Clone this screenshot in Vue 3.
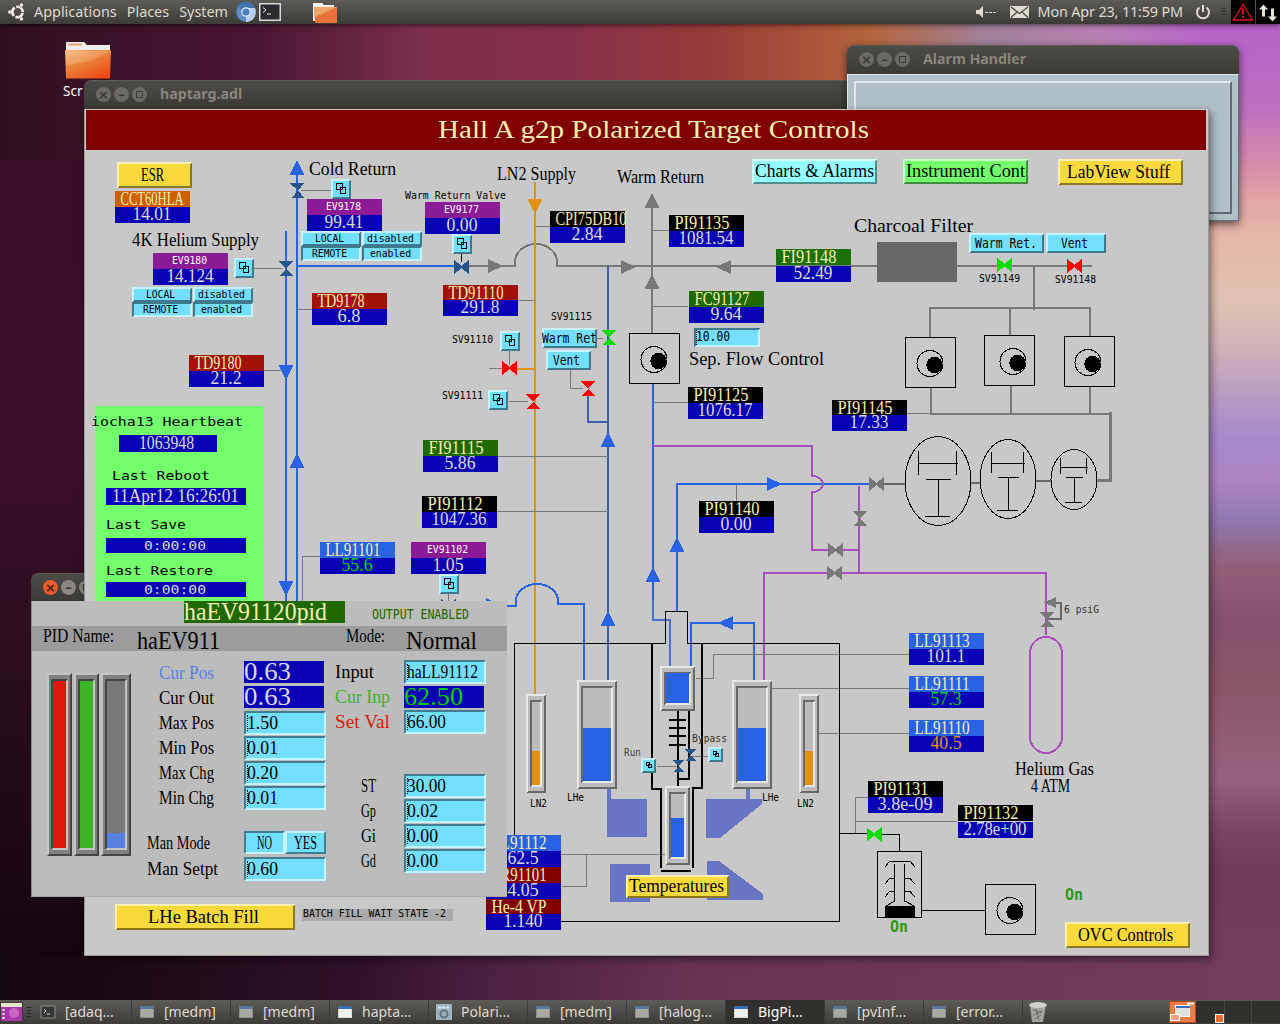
<script setup>
import { h } from 'vue';

/*
 * Fixed-width faces
 * -------------------------------------------------------------------------
 *
 * Every face is laid out in cells: adv = cell width, size = font size.
 *
 */
const faces = {
  big: { adv: 8, size: 18.5, family: '"Liberation Serif", serif', line: 17, base: 14 },
  title: { adv: 12, size: 24.5, family: '"Liberation Serif", serif', line: 22, base: 19 },
  small: { adv: 6, size: 10, family: '"DejaVu Sans Mono", monospace', line: 11, base: 9 },
  medium: { adv: 7, size: 13.5, family: '"DejaVu Sans Mono", monospace', line: 14, base: 11 },
  wide: { adv: 9, size: 13, family: '"DejaVu Sans Mono", monospace', line: 14, base: 11 },
  state: { adv: 9.5, size: 16, family: '"DejaVu Sans Mono", monospace', line: 14, base: 11, weight: 'bold' }
};

// Squeezes a string into its fixed-width cells
const fit = (face, text) => ({
  'font-family': faces[face].family,
  'font-size': faces[face].size,
  'font-weight': faces[face].weight || 'normal',
  textLength: text.length*faces[face].adv-1,
  lengthAdjust: 'spacingAndGlyphs'
});

// Same text for the flow layout of the PID window
const FixedText = (props) => {
  const f = faces[props.face];
  return h('svg', { width: props.text.length*f.adv, height: f.line, class: 'fixed' }, [
    h('text', { x: 0, y: f.base, ...fit(props.face, props.text) }, props.text)
  ]);
};
FixedText.props = ['face', 'text'];

/*
 * Shape helpers
 * -------------------------------------------------------------------------
 *
 * Bevel edges, arrows and valves as path data.
 *
 */
const topLeft = (x, y, w, hh, b = 2) =>
  `M${x} ${y+hh}V${y}H${x+w}l${-b} ${b}H${x+b}V${y+hh-b}Z`;
const bottomRight = (x, y, w, hh, b = 2) =>
  `M${x+w} ${y}V${y+hh}H${x}l${b} ${-b}H${x+w-b}V${y+b}Z`;

const arrow = ([x, y, dir]) => ({
  up: `M${x} ${y}l7.5 15h-15z`,
  down: `M${x} ${y}l7.5 -15h-15z`,
  right: `M${x} ${y}l-15 -7v14z`,
  left: `M${x} ${y}l15 -7v14z`
}[dir]);

const valve = ([x, y, dir, , r = 7.5]) => dir === 'v'
  ? `M${x-r} ${y-r}h${2*r}l${-r+1} ${r}l${r-1} ${r}h${-2*r+2}l${r-1} ${-r}z`
  : `M${x-r} ${y-r}v${2*r}l${r} ${-r+1}l${r} ${r-1}v${-2*r}l${-r} ${r-1}z`;

const BLUE = '#2a62e4';
const STEEL = '#3c60b0';
const GRAY = '#787878';
const PURPLE = '#a94cbc';
const ORANGE = '#e29016';
const CYAN = '#73dfff';
const YELLOW = '#fad93c';

/*
 * Process diagram
 * -------------------------------------------------------------------------
 *
 * All coordinates are in screen pixels, the svg viewBox is offset to fit.
 *
 */
const pipes = [
  [BLUE, 2, 'M297 170V601M286 231V601M297 266H456'],
  [GRAY, 2, 'M468 266H515V262A21 18 0 0 1 557 262V266H877M652 206V333M957 266H1092M1034 266V310'],
  [GRAY, 2, 'M930 337V308H1090V336M1010 308V335M931 388V414H1110M1011 386V414M1090 387V414'],
  [GRAY, 3, 'M1110.5 412V480.5H1097'],
  ['#686868', 2, 'M884 484H905M971 483H980M1036 481H1051'],
  [ORANGE, 2, 'M535 182V694M517 369H535'],
  [STEEL, 2, 'M608 266V680M588 394V422H608'],
  [BLUE, 2, 'M653 383V620M677 611V484H870M507 606H516V601A21 17 0 0 1 558 601V604H584V680'],
  ['#4a70c8', 2, 'M653 600V620H670V666'],
  [BLUE, 2, 'M691 666V623H754V680'],
  [PURPLE, 2, 'M653 446H812V476A11 8 0 0 1 812 492V550H829M842 550H859M859 486V573M764 680V573H828M841 573H1046V635'],
  ['#686868', 2, 'M1055 603H1061V619H1047']
];

const leads = 'M301 190.5H331M254 268.5H282M298 309.5H312M256 370.5H282M535 226.5H550M653 230.5H669'
  + 'M518 300.5H535M509.5 351V365M489 368.5H505M509 401.5H528M597 338.5H603M570.5 370V388.5H583'
  + 'M653 306.5H688M653 402.5H688M907 413.5H931M498 456.5H608M497 511.5H608M320 556.5H302.5V601'
  + 'M736.5 501V485M696 678.5H713.5V654.5H909M772 688.5H916M819 733.5H910M448.5 594V601'
  + 'M561 854.5H665M562 886.5H586.5V854M855.5 833V797.5H868M855.5 821.5H957M657 766.5H678M692 756.5H708';

const arrows = [
  [297, 160, 'up', BLUE], [286, 380, 'down', BLUE], [297, 453, 'up', BLUE], [286, 596, 'down', BLUE],
  [535, 214, 'down', ORANGE], [652, 193, 'up', GRAY], [652, 274, 'up', GRAY],
  [503, 266, 'right', GRAY], [636, 267, 'right', GRAY], [716, 267, 'left', GRAY],
  [608, 432, 'up', BLUE], [608, 611, 'up', BLUE], [501, 605, 'right', BLUE], [782, 484, 'right', BLUE],
  [677, 537, 'up', BLUE], [653, 567, 'up', BLUE], [718, 623, 'left', BLUE]
];

const NAVY = '#28548c';
const valves = [
  [297, 190.5, 'v', NAVY], [285.5, 268.5, 'v', NAVY], [461.5, 267, 'h', NAVY], [448.5, 606, 'h', NAVY],
  [509.5, 368, 'h', '#f00'], [532.5, 401.5, 'v', '#f00'], [587.5, 388.5, 'v', '#f00'], [1074.5, 266, 'h', '#f00'],
  [608.5, 337.5, 'v', '#00dc00'], [1004.5, 265, 'h', '#00dc00'], [874, 834.5, 'h', '#00dc00'],
  [876.5, 484, 'h', GRAY], [859.5, 518.5, 'v', GRAY], [835.5, 550, 'h', GRAY], [834.5, 573, 'h', GRAY],
  [1046.5, 619.5, 'v', GRAY], [678, 766, 'v', NAVY, 6], [690, 755, 'v', NAVY, 6]
];

const VIOLET = '#8a1a96';
const RED = '#a01208';
const readings = [
  { x: 115, y: 191, name: 'CCT60HLA', value: '14.01', bg: '#cc6000' },
  { x: 307, y: 199, name: 'EV9178', value: '99.41', bg: VIOLET, small: true },
  { x: 312, y: 293, name: 'TD9178', value: '6.8', bg: RED },
  { x: 153, y: 253, name: 'EV9180', value: '14.124', bg: VIOLET, small: true },
  { x: 189, y: 355, name: 'TD9180', value: '21.2', bg: RED },
  { x: 425, y: 202, name: 'EV9177', value: '0.00', bg: VIOLET, small: true },
  { x: 550, y: 211, name: 'CPI75DB10', value: '2.84', bg: '#000' },
  { x: 443, y: 285, name: 'TD91110', value: '291.8', bg: RED, gap: -1 },
  { x: 669, y: 215, name: 'PI91135', value: '1081.54', bg: '#000' },
  { x: 776, y: 249, name: 'FI91148', value: '52.49', bg: '#1c7008', gap: 1 },
  { x: 689, y: 291, name: 'FC91127', value: '9.64', bg: '#206800' },
  { x: 688, y: 387, name: 'PI91125', value: '1076.17', bg: '#000' },
  { x: 832, y: 400, name: 'PI91145', value: '17.33', bg: '#000', gap: -1 },
  { x: 423, y: 440, name: 'FI91115', value: '5.86', bg: '#206800' },
  { x: 422, y: 496, name: 'PI91112', value: '1047.36', bg: '#000' },
  { x: 320, y: 542, name: 'LL91101', value: '55.6', bg: BLUE, fg: '#00d800' },
  { x: 411, y: 542, name: 'EV91102', value: '1.05', bg: VIOLET, small: true },
  { x: 699, y: 501, name: 'PI91140', value: '0.00', bg: '#000' },
  { x: 909, y: 633, name: 'LL91113', value: '101.1', bg: BLUE },
  { x: 909, y: 676, name: 'LL91111', value: '57.3', bg: BLUE, fg: '#00d800' },
  { x: 909, y: 720, name: 'LL91110', value: '40.5', bg: BLUE, fg: ORANGE },
  { x: 868, y: 781, name: 'PI91131', value: '3.8e-09', bg: '#000' },
  { x: 958, y: 805, name: 'PI91132', value: '2.78e+00', bg: '#000', gap: 1 },
  { x: 486, y: 835, name: 'LL91112', value: '62.5', bg: BLUE },
  { x: 486, y: 867, name: 'TR91101', value: '4.05', bg: '#800000' },
  { x: 486, y: 899, name: 'He-4 VP', value: '1.140', bg: '#800000', gap: -1 }
];

// x, y, width, height, color, text, face, text x, baseline, pressed
const buttons = [
  [117, 162, 75, 26, YELLOW, 'ESR', 'big', 141, 181],
  [752, 159, 125, 25, '#94ffff', 'Charts & Alarms', 'big', 755, 177],
  [903, 159, 125, 25, '#73ff6b', 'Instrument Cont', 'big', 906, 177],
  [1058, 159, 125, 26, YELLOW, 'LabView Stuff', 'big', 1067, 178],
  [115, 904, 180, 26, YELLOW, 'LHe Batch Fill', 'big', 148, 923],
  [626, 875, 103, 23, YELLOW, 'Temperatures', 'big', 629, 892],
  [1065, 922, 125, 26, YELLOW, 'OVC Controls', 'big', 1078, 941],
  [969, 233, 75, 20, CYAN, 'Warm Ret.', 'medium', 975, 248],
  [1046, 233, 60, 20, CYAN, 'Vent', 'medium', 1061, 248],
  [542, 328, 55, 20, CYAN, 'Warm Ret', 'medium', 542, 343],
  [546, 350, 45, 20, CYAN, 'Vent', 'medium', 553, 365],
  [301, 231, 60, 15, CYAN, 'LOCAL', 'small', 315, 242],
  [301, 246, 60, 15, CYAN, 'REMOTE', 'small', 312, 257, true],
  [362, 231, 60, 15, CYAN, 'disabled', 'small', 367, 242],
  [362, 246, 60, 15, CYAN, 'enabled', 'small', 370, 257, true],
  [132, 287, 60, 15, CYAN, 'LOCAL', 'small', 146, 298],
  [132, 302, 60, 15, CYAN, 'REMOTE', 'small', 143, 313, true],
  [193, 287, 60, 15, CYAN, 'disabled', 'small', 198, 298],
  [193, 302, 60, 15, CYAN, 'enabled', 'small', 201, 313, true],
  [694, 328, 66, 19, CYAN, '10.00', 'medium', 696, 341, true]
];

// Related display buttons: x, y, size
const linkButtons = [
  [331, 179, 20], [234, 258, 20], [452, 234, 20], [500, 331, 20], [488, 390, 20], [439, 574, 20],
  [641, 758, 15], [708, 747, 15]
];

const labels = [
  ['big', 309, 175, 'Cold Return'], ['big', 497, 180, 'LN2 Supply'], ['big', 617, 183, 'Warm Return'],
  ['big', 132, 246, '4K Helium Supply'], ['big', 854, 232, 'Charcoal Filter'], ['big', 689, 365, 'Sep. Flow Control'],
  ['big', 1015, 775, 'Helium Gas'], ['big', 1031, 792, '4 ATM'],
  ['small', 405, 199, 'Warm Return Valve'], ['small', 452, 343, 'SV91110'], ['small', 442, 399, 'SV91111'],
  ['small', 551, 320, 'SV91115'], ['small', 979, 282, 'SV91149'], ['small', 1055, 283, 'SV91148'],
  ['small', 624, 756, 'Run', '#444'], ['small', 692, 742, 'Bypass', '#333'], ['small', 567, 801, 'LHe'],
  ['small', 530, 807, 'LN2'], ['small', 762, 801, 'LHe'], ['small', 797, 807, 'LN2'], ['small', 1064, 613, '6 psiG', '#333'],
  ['state', 890, 932, 'On', '#30980c'], ['state', 1065, 900, 'On', '#30980c'],
  ['wide', 91, 426, 'iocha13 Heartbeat'], ['wide', 112, 480, 'Last Reboot'],
  ['wide', 106, 529, 'Last Save'], ['wide', 106, 575, 'Last Restore']
];

const stamps = [
  [119, 435, 98, 17, 'big', 139, 449, '1063948'],
  [106, 488, 140, 17, 'big', 112, 502, '11Apr12 16:26:01'],
  [106, 538, 140, 15, 'wide', 144, 550, '0:00:00'],
  [106, 582, 140, 15, 'wide', 144, 594, '0:00:00']
];

const tanks = [
  { x: 526, y: 694, w: 20, h: 99, top: 751, color: ORANGE },
  { x: 799, y: 694, w: 20, h: 99, top: 751, color: ORANGE },
  { x: 577, y: 680, w: 40, h: 109, top: 728, color: BLUE },
  { x: 732, y: 680, w: 40, h: 109, top: 728, color: BLUE },
  { x: 660, y: 666, w: 35, h: 45, top: 673, color: BLUE },
  { x: 665, y: 786, w: 25, h: 79, top: 818, color: BLUE }
];

// Vacuum pumps: box x, box y, rotor x offset
const pumps = [[629.5, 333.5, 24.5], [905.5, 337.5, 24.5], [984.5, 335.5, 28.5], [1064.5, 336.5, 23.5], [985.5, 884.5, 24.5]];

const blowers = [
  { cx: 938, cy: 481, rx: 33, ry: 44.5, d: 'M918.5 451V475M956.5 451V475M918 463.5H958M926 479.5H951M938.5 480V516M925 516.5H950' },
  { cx: 1008, cy: 479, rx: 28, ry: 39.5, d: 'M991.5 452V473M1023.5 452V473M991 463.5H1025M998 477.5H1019M1008.5 478V510M997 510.5H1018' },
  { cx: 1074, cy: 479.5, rx: 23, ry: 30, d: 'M1060.5 458V474M1086.5 458V474M1060 467.5H1088M1066 477.5H1083M1074.5 478V502M1065 502.5H1082' }
];

/*
 * PID window
 * -------------------------------------------------------------------------
 */
const gauges = [
  { width: 25, level: 100, color: '#e0180c' },
  { width: 25, level: 100, color: '#3cb424' },
  { width: 30, level: 9, color: '#5880e0' }
];

const leftRows = [
  { name: 'Cur Pos', value: '0.63', live: true, tone: 'blue' },
  { name: 'Cur Out', value: '0.63', live: true },
  { name: 'Max Pos', value: '1.50' },
  { name: 'Min Pos', value: '0.01' },
  { name: 'Max Chg', value: '0.20' },
  { name: 'Min Chg', value: '0.01' }
];

const inputRows = [
  { name: 'Input', value: 'haLL91112' },
  { name: 'Cur Inp', value: '62.50', live: true, tone: 'green' },
  { name: 'Set Val', value: '66.00', tone: 'red' }
];

const gainRows = [
  { name: 'ST', value: '30.00' },
  { name: 'Gp', value: '0.02' },
  { name: 'Gi', value: '0.00' },
  { name: 'Gd', value: '0.00' }
];

const tasks = [
  { name: '[adaq...', icon: 'term' }, { name: '[medm]' }, { name: '[medm]' }, { name: 'hapta...', icon: 'open' },
  { name: 'Polari...', icon: 'gear' }, { name: '[medm]' }, { name: '[halog...' },
  { name: 'BigPi...', icon: 'open', active: true }, { name: '[pvInf...' }, { name: '[error...' }
];
</script>

<template>
  <div class="desktop">
    <!-- Top panel -->
    <header class="panel">
      <svg class="logo" width="18" height="18" viewBox="0 0 18 18">
        <circle cx="9.500" cy="9" r="5.200" fill="none" stroke="#f2efe8" stroke-width="2.600" stroke-dasharray="9.300 1.600" stroke-dashoffset="-.8" />
        <circle cx="1.800" cy="9" r="1.700" fill="#f2efe8" />
        <circle cx="13.500" cy="2" r="1.700" fill="#f2efe8" />
        <circle cx="13.500" cy="16" r="1.700" fill="#f2efe8" />
      </svg>
      <span class="menu">Applications</span>
      <span class="menu">Places</span>
      <span class="menu">System</span>
      <svg class="launcher" width="20" height="20" viewBox="0 0 20 20">
        <circle cx="10" cy="10" r="9.800" fill="#5c8cc4" />
        <path d="M10 10L1 5A10 10 0 0 1 19 6Z" fill="#4474ac" />
        <path d="M10 6H19A10 10 0 0 1 10 20Z" fill="#b4d0ec" />
        <circle cx="10" cy="10" r="4.800" fill="#e4eef8" />
        <circle cx="10" cy="10" r="3.600" fill="#4a80c4" />
      </svg>
      <svg class="launcher" width="22" height="18" viewBox="0 0 22 18">
        <rect x=".75" y=".75" width="20.500" height="16.500" fill="#282c2c" stroke="#dcdcd8" stroke-width="1.500" />
        <path d="M4 4.500l3 2.500l-3 2.500M8 11H12" fill="none" stroke="#eee" />
      </svg>
      <svg class="folder-small" width="24" height="20" viewBox="0 0 24 20">
        <path d="M0 0H9L11 2H21V18H0Z" fill="#f4f0ec" />
        <path d="M1 4H24V20H2Z" fill="#e8743c" />
        <path d="M1 4H24L2 14Z" fill="#f0a468" />
      </svg>
      <div class="spacer"></div>
      <svg width="22" height="14" viewBox="0 0 22 14">
        <path d="M1 5H4L8 1V13L4 9H1Z" fill="#dfdbd2" />
        <path d="M10 7.500H21" stroke="#dfdbd2" stroke-dasharray="3 1" />
      </svg>
      <svg class="mail" width="19" height="14" viewBox="0 0 19 14">
        <rect y="1" width="19" height="12" rx="1" fill="#dfdbd2" />
        <path d="M1 2L9.500 8.500L18 2M1 12.500L7 7M18 12.500L12 7" fill="none" stroke="#4a4843" stroke-width="1.300" />
      </svg>
      <span class="clock">Mon Apr 23, 11:59 PM</span>
      <svg class="power" width="16" height="16" viewBox="0 0 16 16">
        <path d="M4.500 3.500A6 6 0 1 0 11.500 3.500M8 1V8" fill="none" stroke="#dfdbd2" stroke-width="2" />
      </svg>
      <svg class="grip" width="4" height="10"><path d="M0 1.500H4M0 4.500H4M0 7.500H4" stroke="#34332f" /></svg>
      <svg class="tray" width="24" height="23" viewBox="0 0 24 23">
        <path d="M12 4L21.500 19.500H2.500Z" fill="none" stroke="#e8141c" stroke-width="1.300" />
        <path d="M12 8V14M12 15.500V17.500" stroke="#e8141c" stroke-width="2" />
      </svg>
      <svg class="tray" width="24" height="23" viewBox="0 0 24 23">
        <path d="M7.500 4L12 9H9V16H6V9H3Z" fill="#e8e4da" />
        <path d="M16.500 21L21 16H18V8H15V16H12Z" fill="#e8e4da" />
      </svg>
    </header>

    <!-- Desktop icon -->
    <div class="desk-icon">
      <svg width="48" height="40" viewBox="0 0 48 40">
        <defs>
          <linearGradient id="folder" x1="0" y1="0" x2=".7" y2="1">
            <stop offset="0" stop-color="#f4b878" />
            <stop offset=".5" stop-color="#ec8038" />
            <stop offset="1" stop-color="#ea4c14" />
          </linearGradient>
        </defs>
        <path d="M2 2H20L23 5H46V38H2Z" fill="#f2eeee" />
        <path d="M4 4.500H18" stroke="#e8a078" stroke-width="2" />
        <path d="M1 10H47L46 38.500H2Z" fill="url(#folder)" />
        <path d="M2 11H46Q30 22 2 25Z" fill="#fff" opacity=".16" />
      </svg>
      <span>Scr</span>
    </div>

    <!-- haptarg title bar sits below the alarm handler, its content above -->
    <div class="titlebar main-title">
      <i class="knob">×</i><i class="knob">–</i><i class="knob"><b></b></i>
      <span>haptarg.adl</span>
    </div>

    <section class="alarm">
      <div class="titlebar">
        <i class="knob">×</i><i class="knob">–</i><i class="knob"><b></b></i>
        <span>Alarm Handler</span>
      </div>
      <div class="alarm-body"><div class="alarm-frame"></div></div>
    </section>

    <div class="titlebar pid-title">
      <i class="knob hot">×</i><i class="knob lit">–</i><i class="knob lit"><b></b></i>
    </div>

    <!-- Target controls -->
    <svg class="controls" width="1125" height="847" viewBox="84 109 1125 847">
      <rect x="84" y="109" width="1125" height="847" fill="#c8c8c8" />
      <path d="M84.500 109V956M1208.500 109V955.500H84" fill="none" stroke="#9c9894" />
      <rect x="86" y="110" width="1120" height="40" fill="#800000" />
      <text x="438" y="138" fill="#f4f0b4" v-bind="fit('title', 'Hall A g2p Polarized Target Controls')">Hall A g2p Polarized Target Controls</text>

      <rect x="95" y="406" width="169" height="196" fill="#73ff6b" />
      <rect x="302" y="909" width="151" height="12" fill="#aaa" />
      <text x="303" y="917" v-bind="fit('small', 'BATCH FILL WAIT STATE -2')">BATCH FILL WAIT STATE -2</text>

      <!-- Magnets -->
      <g fill="#6874c4">
        <path d="M607 789H611V799H647V837H607ZM610 864H650V902H610Z" />
        <path d="M746 789H750V799H762V804L720 838H706V799H746ZM707 861H719L763 894V900H707Z" />
      </g>

      <path v-for="([color, width, d], i) in pipes" :key="'p'+i" :d="d" :stroke="color" :stroke-width="width" fill="none" />
      <path :d="leads" stroke="#787878" fill="none" />
      <rect x="1030" y="637" width="32" height="116" rx="16" fill="none" stroke="#a94cbc" stroke-width="2" />
      <rect x="877" y="242" width="80" height="40" fill="#686868" />

      <!-- Cryostat -->
      <g fill="none" stroke="#000">
        <path d="M514.500 835V643.500H665.500V611.500H687.500V643.500H839.500V922M561 921.500H839M840 833.500H867M881 834.500H899.500V851M461.500 254V262" />
        <path d="M652 643V789H661V868M702 643V788H693V868M661 871H691M678 711V786M689 711V779H678M669 720H686M669 728H686M669 736H686M669 745H686" stroke-width="2" />
      </g>

      <g v-for="t in tanks" :key="t.x+'-'+t.y">
        <rect :x="t.x" :y="t.y" :width="t.w" :height="t.h" fill="#bcbcbc" />
        <path :d="topLeft(t.x, t.y, t.w, t.h)" fill="#e8e8e8" />
        <path :d="bottomRight(t.x, t.y, t.w, t.h)" fill="#686868" />
        <path :d="topLeft(t.x+4, t.y+6, t.w-8, t.h-12)" fill="#686868" />
        <path :d="bottomRight(t.x+4, t.y+6, t.w-8, t.h-12)" fill="#e8e8e8" />
        <rect :x="t.x+6" :y="t.top" :width="t.w-12" :height="t.y+t.h-8-t.top" :fill="t.color" />
      </g>

      <path v-for="(a, i) in arrows" :key="'a'+i" :d="arrow(a)" :fill="a[3]" />
      <path v-for="(v, i) in valves" :key="'v'+i" :d="valve(v)" :fill="v[3]" />
      <path d="M1044 602.500L1056 597V608Z" fill="#787878" />

      <!-- Pumps -->
      <g v-for="([x, y, dx], i) in pumps" :key="'m'+i">
        <rect :x="x" :y="y" width="50" height="50" fill="none" stroke="#000" />
        <circle :cx="x+dx" :cy="y+26" r="13" fill="none" stroke="#000" />
        <circle :cx="x+dx+4.500" :cy="y+27.500" r="8.200" />
      </g>
      <g v-for="b in blowers" :key="b.cx" fill="none" stroke="#000">
        <ellipse :cx="b.cx" :cy="b.cy" :rx="b.rx" :ry="b.ry" />
        <path :d="b.d" />
      </g>

      <!-- Turbo pump -->
      <g fill="none" stroke="#000">
        <rect x="877.500" y="851.500" width="44" height="66" />
        <path d="M885 867L889.500 861.500H910.500L915 867M894.500 864V902M904.500 864V902" />
        <path d="M885 884L889.500 878.500H894M905 878.500H910L915 884M885 897L889.500 891.500H894M905 891.500H910L915 897M886 906L895 901M914 906L905 901" />
        <path d="M922 910.500H985" />
        <rect x="885" y="906" width="30" height="11" fill="#000" stroke="none" />
      </g>

      <g v-for="r in readings" :key="r.name">
        <rect :x="r.x" :y="r.y" width="75" :height="16+Math.min(r.gap || 0, 0)" :fill="r.bg" />
        <rect :x="r.x" :y="r.y+16+(r.gap || 0)" width="75" height="16" fill="#0800b4" />
        <text v-if="r.small" :x="r.x+37-r.name.length*3" :y="r.y+11" fill="#fff" v-bind="fit('small', r.name)">{{ r.name }}</text>
        <text v-else :x="r.x+5.500" :y="r.y+13.500" fill="#f4f0b4" v-bind="fit('big', r.name)">{{ r.name }}</text>
        <text :x="r.x+37.500-r.value.length*4" :y="r.y+29+(r.gap || 0)" :fill="r.fg || '#dcdcdc'" v-bind="fit('big', r.value)">{{ r.value }}</text>
      </g>

      <g v-for="([x, y, w, hh, face, tx, ty, text], i) in stamps" :key="'s'+i">
        <rect :x="x" :y="y" :width="w" :height="hh" fill="#0800b4" />
        <text :x="tx" :y="ty" fill="#dcdcdc" v-bind="fit(face, text)">{{ text }}</text>
      </g>

      <g v-for="([x, y, w, hh, color, text, face, tx, ty, pressed], i) in buttons" :key="'b'+i">
        <rect :x="x" :y="y" :width="w" :height="hh" :fill="color" />
        <path :d="topLeft(x, y, w, hh)" :class="pressed ? 'shade' : 'shine'" />
        <path :d="bottomRight(x, y, w, hh)" :class="pressed ? 'shine' : 'shade'" />
        <text :x="tx" :y="ty" v-bind="fit(face, text)">{{ text }}</text>
      </g>
      <path d="M696.500 330V345" stroke="#000" stroke-dasharray="1 1" />

      <g v-for="([x, y, s], i) in linkButtons" :key="'l'+i">
        <rect :x="x" :y="y" :width="s" :height="s" :fill="CYAN" />
        <path :d="topLeft(x, y, s, s)" class="shine" />
        <path :d="bottomRight(x, y, s, s)" class="shade" />
        <path v-if="s === 20" :d="`M${x+5.500} ${y+4.500}h6v6h-6zM${x+9.500} ${y+8.500}h5v6h-5z`" fill="none" stroke="#000" />
        <path v-else :d="`M${x+5.500} ${y+4.500}h3v3h-3zM${x+7.500} ${y+6.500}h3v3h-3z`" fill="none" stroke="#000" />
      </g>

      <text v-for="([face, x, y, text, color], i) in labels" :key="'t'+i" :x="x" :y="y" :fill="color || '#000'" v-bind="fit(face, text)">{{ text }}</text>
    </svg>

    <!-- PID window content -->
    <section class="pid">
      <div class="pid-head">
        <span class="pid-name"><FixedText face="title" text="haEV91120pid" /></span>
        <FixedText class="enabled" face="medium" text="OUTPUT ENABLED" />
      </div>
      <div class="pid-bar">
        <FixedText class="bar-label" face="big" text="PID Name:" />
        <FixedText class="bar-name" face="title" text="haEV911" />
        <FixedText class="bar-label" face="big" text="Mode:" />
        <FixedText class="bar-mode" face="title" text="Normal" />
      </div>
      <div class="pid-body">
        <div class="gauges">
          <div v-for="g in gauges" :key="g.color" class="gauge" :style="{ width: g.width+'px' }">
            <div class="well"><div :style="{ height: g.level+'%', background: g.color }"></div></div>
          </div>
        </div>
        <div class="column left">
          <div v-for="r in leftRows" :key="r.name" class="row">
            <FixedText :class="['name', r.tone]" face="big" :text="r.name" />
            <span :class="r.live ? 'live' : 'entry'"><FixedText :face="r.live ? 'title' : 'big'" :text="r.value" /></span>
          </div>
          <div class="row manual">
            <FixedText class="name" face="big" text="Man Mode" />
            <span class="choice on"><FixedText face="big" text="NO" /></span>
            <span class="choice"><FixedText face="big" text="YES" /></span>
          </div>
          <div class="row manual setpt">
            <FixedText class="name" face="big" text="Man Setpt" />
            <span class="entry"><FixedText face="big" text="0.60" /></span>
          </div>
        </div>
        <div class="column right">
          <div v-for="r in inputRows" :key="r.name" class="row">
            <FixedText :class="['name', r.tone]" face="big" :text="r.name" />
            <span :class="r.live ? ['live', r.tone] : 'entry'"><FixedText :face="r.live ? 'title' : 'big'" :text="r.value" /></span>
          </div>
          <div class="gains">
            <div v-for="r in gainRows" :key="r.name" class="row">
              <FixedText class="name" face="big" :text="r.name" />
              <span class="entry"><FixedText face="big" :text="r.value" /></span>
            </div>
          </div>
        </div>
      </div>
    </section>

    <!-- Bottom panel -->
    <footer class="taskbar">
      <svg class="show-desktop" width="23" height="20" viewBox="0 0 23 20">
        <rect width="23" height="20" fill="#3c3b37" />
        <rect x="1" y="1" width="21" height="4" fill="#e8e4d0" />
        <rect x="1" y="5" width="21" height="14" fill="#a838a8" />
        <circle cx="14" cy="11" r="5" fill="#c868c4" />
        <path d="M3.500 7V17" stroke="#fff" stroke-width="2" stroke-dasharray="2 2" />
      </svg>
      <svg class="grip" width="4" height="12"><path d="M0 1.500H4M0 4.500H4M0 7.500H4M0 10.500H4" stroke="#2c2b28" /></svg>
      <div v-for="(t, i) in tasks" :key="i" :class="['task', { active: t.active }]">
        <svg width="16" height="16" viewBox="0 0 16 16">
          <template v-if="t.icon === 'term'">
            <rect x="1" y="2" width="14" height="12" fill="#34363a" stroke="#8c8c88" />
            <path d="M4 5l2 2l-2 2M7 10H10" fill="none" stroke="#ccc" />
          </template>
          <template v-else-if="t.icon === 'gear'">
            <rect width="16" height="16" fill="#9cb4bc" />
            <circle cx="8" cy="10" r="3.500" fill="none" stroke="#5c747c" stroke-width="2" />
            <path d="M2 3.500H14" stroke="#dce8ec" stroke-width="2" stroke-dasharray="3 1" />
          </template>
          <template v-else>
            <rect x="1.500" y="2.500" width="13" height="11" :fill="t.icon ? '#f0f0ec' : '#a8a8a4'" :stroke="t.icon ? '#d4d8dc' : '#8c8c88'" />
            <rect x="1" y="2" width="14" height="3" :fill="t.icon ? '#3c6cb4' : '#5c7498'" />
          </template>
        </svg>
        <span>{{ t.name }}</span>
      </div>
      <svg class="trash" width="22" height="22" viewBox="0 0 22 22">
        <path d="M3 4L5 21H16L19 4Z" fill="#a4a4a0" />
        <ellipse cx="11" cy="4" rx="9" ry="3" fill="#d0d0cc" />
        <path d="M6 9L15 12M6 14L15 10M8 18L14 14M9 8L12 19" stroke="#6c6c68" />
      </svg>
      <div class="spacer"></div>
      <svg class="pager" width="111" height="22" viewBox="0 0 111 22">
        <rect width="111" height="22" fill="#302f2c" />
        <rect width="27" height="22" fill="#b4481c" />
        <rect x="1" y="1" width="25" height="20" fill="#f07c48" />
        <path d="M55.500 0V22M82.500 0V22" stroke="#484743" />
        <rect x="6.500" y="4.500" width="14" height="11" fill="#dfe3e0" stroke="#fff" />
        <rect x="7" y="5" width="14" height="2" fill="#3c6cb4" />
        <path d="M18 2.500H25" stroke="#fff" stroke-width="2" />
        <rect x="1.500" y="13.500" width="9" height="6" fill="#f4a888" stroke="#fff" />
        <rect x="46.500" y="13.500" width="8" height="8" fill="#ec6c34" stroke="#fff" />
      </svg>
    </footer>
  </div>
</template>

<style scoped>
.desktop {
  position: relative;
  width: 1280px;
  height: 1024px;
  overflow: hidden;
  font-family: "Noto Sans", sans-serif;
  background:
    linear-gradient(180deg, #b664c8 50px, #c070c0 110px, #d88cac 165px, #e2a4a4 200px, #e4b8a8 240px, #e0c2b2 300px, #d0b0b8 350px, #b898c4 400px, #a888cc 440px, #b084c4 480px, #9078b0 520px, #946078 565px, #84506c 620px, #8c5468 680px, #945c74 740px, #98607c 780px, #7c4460 830px, #703a54 870px, #743c5a 956px) 1209px 0 / 71px 100% no-repeat,
    linear-gradient(90deg, #14060e, #200c18 15%, #32102a 28%, #4a2040 38%, #6a3452 55%, #743c5a) 0 956px / 100% 68px no-repeat,
    linear-gradient(90deg, #300f20, #481630 20%, #7c2f4c 33%, #86304a 45%, #983c38 56%, #b4643c 68%, #a08098 77%, #b880b4 86%, #b664c8 94%) 0 0 / 100% 160px no-repeat,
    linear-gradient(180deg, #380f26 160px, #3c1028 450px, #2c0d1e 650px, #14060e 956px);
}
svg { display: block; }
.fixed { overflow: visible; fill: currentColor; flex: none; }
.spacer { flex: 1; }

/* Panels */
.panel {
  display: flex;
  align-items: center;
  height: 24px;
  color: #dfdbd2;
  font-size: 14.4px;
  background: linear-gradient(#5c5b55, #3c3b37);
  position: relative;
  box-shadow: 0 1px 5px rgba(0, 0, 0, .6);
}
.logo { margin: 0 8px; }
.menu { margin: -1px 10px 0 0; white-space: nowrap; }
.launcher { margin-left: -2px; margin-right: 5px; }
.folder-small { margin: 2px 0 0 27px; }
.mail { margin-left: 13px; }
.clock { margin: -1px 12px 0 9px; white-space: nowrap; letter-spacing: -.15px; }
.panel .grip { margin: 0 4px 0 11px; }
.tray { height: 24px; background: #000; margin-left: 1px; }

.taskbar {
  position: absolute;
  left: 0;
  bottom: 0;
  width: 100%;
  height: 24px;
  display: flex;
  align-items: center;
  color: #dfdbd2;
  font-size: 14px;
  background: linear-gradient(#5c5b55, #3c3b37);
}
.taskbar .grip { margin: 0 2px 0 4px; }
.task {
  display: flex;
  align-items: center;
  gap: 9px;
  width: 99px;
  height: 24px;
  padding-left: 7px;
  box-sizing: border-box;
  border-right: 1px solid #3a3935;
  white-space: nowrap;
}
.task span { margin-top: -2px; }
.task.active { background: #31302c; color: #fff; }
.trash { margin-left: 4px; }

.desk-icon {
  position: absolute;
  left: 64px;
  top: 40px;
  width: 48px;
  color: #fff;
  font-size: 13.5px;
}
.desk-icon span { display: block; margin: 2px 0 0 -1px; }

/* Windows */
.titlebar {
  display: flex;
  align-items: center;
  height: 29px;
  box-sizing: border-box;
  padding-left: 10px;
  gap: 3px;
  color: #8a867e;
  font-weight: bold;
  font-size: 14.2px;
  background: linear-gradient(#4c4b46, #3a3935);
  border-top: 1px solid #5c5a54;
}
.titlebar span { margin: -3px 0 0 10px; }
.knob {
  display: flex;
  flex: none;
  align-items: center;
  justify-content: center;
  width: 15px;
  height: 15px;
  border-radius: 50%;
  background: #6c6a64;
  color: #3a3935;
  font: bold 13px/15px "DejaVu Sans", sans-serif;
}
.knob b { width: 5px; height: 5px; border: 1px solid #3a3935; }
.knob.hot { background: #ec5c2c; color: #4c1a08; }
.knob.lit { background: #8a8780; }
.main-title { position: absolute; left: 84px; top: 80px; width: 780px; border-radius: 7px 0 0 0; padding: 0 0 1px 12px; }
.pid-title { position: absolute; left: 31px; top: 573px; width: 54px; overflow: hidden; border-radius: 7px 0 0 0; padding: 0 0 2px 12px; }
.alarm {
  position: absolute;
  left: 847px;
  top: 45px;
  width: 392px;
  height: 176px;
  display: flex;
  flex-direction: column;
  box-shadow: 0 3px 8px rgba(0, 0, 0, .6);
  border-radius: 7px 7px 0 0;
}
.alarm .titlebar { border-radius: 7px 7px 0 0; padding: 0 0 1px 12px; }
.alarm-body {
  flex: 1;
  display: flex;
  padding: 6px;
  background: #b0c0c8;
  border: 1px solid #e0e8ec;
  border-right-color: #687078;
  border-bottom-color: #687078;
}
.alarm-frame { flex: 1; border: 2px solid #e0e8ec; border-right-color: #606c74; border-bottom-color: #606c74; }

.controls { position: absolute; left: 84px; top: 109px; shape-rendering: crispEdges; box-shadow: 2px 3px 8px rgba(0, 0, 0, .5); }
.controls text { white-space: pre; }
.shine { fill: #fff; fill-opacity: .6; }
.shade { fill: #000; fill-opacity: .45; }

/* PID window */
.pid {
  position: absolute;
  left: 31px;
  top: 601px;
  width: 476px;
  height: 296px;
  background: #bcbcbc;
  box-sizing: border-box;
  border-left: 1px solid #8c8884;
  border-bottom: 1px solid #a8a8a4;
}
.pid-head { display: flex; height: 25px; padding-left: 152px; }
.pid-name { width: 161px; height: 22px; background: #206800; color: #f4f0b4; }
.enabled { margin: 7px 0 0 27px; color: #206800; }
.pid-bar { display: flex; height: 25px; background: #9c9c9c; padding-left: 11px; }
.bar-label { margin-top: 2px; }
.bar-name { margin: 4px 125px 0 22px; }
.bar-mode { margin: 4px 0 0 20px; }
.pid-body { display: flex; padding: 10px 0 0 15px; }
.gauges { display: flex; gap: 2px; margin-top: 12px; height: 183px; }
.gauge {
  box-sizing: border-box;
  padding: 4px 2px;
  background: #808080;
  border: 2px solid #c4c4c4;
  border-right-color: #444;
  border-bottom-color: #444;
}
.well {
  height: 167px;
  display: flex;
  flex-direction: column;
  justify-content: flex-end;
  background: #787878;
  border: 2px solid #444;
  border-right-color: #c4c4c4;
  border-bottom-color: #c4c4c4;
}
.column.left { width: 181px; margin-left: 14px; }
.column.right { width: 151px; margin-left: 9px; margin-top: -1px; }
.row { display: flex; height: 25px; justify-content: flex-end; }
.name { margin: 4px auto 0 0; }
.left .name { margin-left: 14px; }
.left .manual .name { margin-left: 2px; }
.live, .entry { width: 82px; height: 24px; box-sizing: border-box; }
.live { width: 80px; height: 22px; margin-right: 2px; background: #0800b4; color: #dcdcdc; }
.right .live { margin-top: 1px; }
.live.green { color: #00d000; }
.entry {
  padding: 2px 0 0 1px;
  background: #73dfff;
  border: 2px solid #427c90;
  border-right-color: #c4f4ff;
  border-bottom-color: #c4f4ff;
  position: relative;
}
.entry::before { content: ""; position: absolute; left: 1px; top: 2px; height: 16px; border-left: 1px dotted #000; }
.blue { color: #5880e0; }
.green { color: #3cb424; }
.name.red { color: #e0180c; }
.manual { margin-top: 20px; }
.manual.setpt { margin-top: 1px; }
.choice {
  display: flex;
  justify-content: center;
  width: 41px;
  height: 23px;
  padding-top: 2px;
  box-sizing: border-box;
  background: #73dfff;
  border: 2px solid #c4f4ff;
  border-right-color: #427c90;
  border-bottom-color: #427c90;
}
.choice.on { border-color: #427c90 #c4f4ff #c4f4ff #427c90; }
.gains { margin-top: 39px; }
.gains .name { margin-left: 26px; }
</style>

<style>
body { overflow: hidden; }
</style>
